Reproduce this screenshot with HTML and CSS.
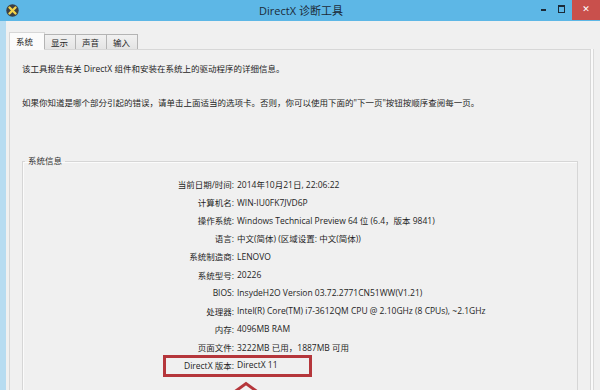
FILE: index.html
```html
<!DOCTYPE html>
<html lang="zh-CN">
<head>
<meta charset="utf-8">
<title>DirectX 诊断工具</title>
<link rel="stylesheet" href="styles.css">
</head>
<body>
<div class="window">
  <header class="titlebar">
    <div class="tb-left">
      <svg class="app-icon" width="13" height="13" viewBox="0 0 13 13">
        <circle cx="6.5" cy="6.5" r="6.2" fill="#3b3f44"/>
        <path d="M3.5 3.5 L9.5 9.5 M9.5 3.5 L3.5 9.5" stroke="#f2d24a" stroke-width="2.4" stroke-linecap="round"/>
      </svg>
    </div>
    <div class="title">DirectX 诊断工具</div>
    <div class="controls">
      <span class="ctl min"><span class="dash"></span></span>
      <span class="ctl max"><span class="box"></span></span>
      <span class="ctl close">✕</span>
    </div>
  </header>
  <div class="frame">
    <div class="client">
      <nav class="tabs">
        <span class="tab active">系统</span>
        <span class="tab">显示</span>
        <span class="tab">声音</span>
        <span class="tab">输入</span>
      </nav>
      <section class="panel">
        <p class="intro first">该工具报告有关 DirectX 组件和安装在系统上的驱动程序的详细信息。</p>
        <p class="intro second">如果你知道是哪个部分引起的错误，请单击上面适当的选项卡。否则，你可以使用下面的"下一页"按钮按顺序查阅每一页。</p>
        <fieldset class="group">
          <legend>系统信息</legend>
          <div class="row"><span class="label">当前日期/时间:</span><span class="value">2014年10月21日, 22:06:22</span></div>
          <div class="row"><span class="label">计算机名:</span><span class="value">WIN-IU0FK7JVD6P</span></div>
          <div class="row"><span class="label">操作系统:</span><span class="value">Windows Technical Preview 64 位 (6.4，版本 9841)</span></div>
          <div class="row"><span class="label">语言:</span><span class="value">中文(简体) (区域设置: 中文(简体))</span></div>
          <div class="row"><span class="label">系统制造商:</span><span class="value">LENOVO</span></div>
          <div class="row"><span class="label">系统型号:</span><span class="value">20226</span></div>
          <div class="row"><span class="label">BIOS:</span><span class="value">InsydeH2O Version 03.72.2771CN51WW(V1.21)</span></div>
          <div class="row"><span class="label">处理器:</span><span class="value">Intel(R) Core(TM) i7-3612QM CPU @ 2.10GHz (8 CPUs), ~2.1GHz</span></div>
          <div class="row"><span class="label">内存:</span><span class="value">4096MB RAM</span></div>
          <div class="row"><span class="label">页面文件:</span><span class="value">3222MB 已用，1887MB 可用</span></div>
          <div class="row hl"><span class="label">DirectX 版本:</span><span class="value">DirectX 11</span>
            <svg class="arrow" width="30" height="12" viewBox="0 0 30 12">
              <polyline points="2,12 15,2.5 28,12" fill="none" stroke="#b5363b" stroke-width="3"/>
            </svg>
          </div>
        </fieldset>
      </section>
    </div>
  </div>
</div>
</body>
</html>
```
FILE: styles.css
```css
html, body {
  margin: 0;
  padding: 0;
  background: #f0f0f0;
}
body {
  width: 600px;
  height: 390px;
  overflow: hidden;
  font-family: "Open Sans", "Noto Sans CJK SC", sans-serif;
  font-size: 8.5px;
  color: #1e1e1e;
}
.window {
  display: flex;
  flex-direction: column;
  height: 390px;
}
.titlebar {
  height: 21px;
  flex: none;
  background: #5db7e6;
  display: grid;
  grid-template-columns: 1fr auto 1fr;
  align-items: center;
}
.tb-left {
  display: flex;
  align-items: center;
  padding-left: 6px;
}
.app-icon { display: block; }
.title {
  font-size: 11px;
  color: #1b2a38;
  line-height: 21px;
  padding-left: 2px;
}
.controls {
  display: flex;
  justify-content: flex-end;
  align-self: start;
  height: 20px;
}
.ctl {
  display: flex;
  align-items: center;
  justify-content: center;
  height: 20px;
}
.min { width: 15px; }
.min .dash {
  width: 5px;
  height: 2px;
  background: #1b2a38;
}
.max { width: 21px; }
.max .box {
  width: 5px;
  height: 5px;
  border: 1px solid #1b2a38;
  border-top-width: 2px;
  margin-top: -3px;
}
.close {
  width: 28px;
  background: #c9504c;
  color: #fff;
  font-size: 9px;
  font-weight: bold;
  font-family: "DejaVu Sans", sans-serif;
  padding-bottom: 2px;
  box-sizing: border-box;
}
.frame {
  flex: 1;
  display: flex;
  border-left: 6px solid #b7dcf1;
}
.client {
  flex: 1;
  padding: 11px 9px 0 3px;
  display: flex;
  flex-direction: column;
}
.tabs {
  display: flex;
  align-items: flex-end;
  height: 17px;
  position: relative;
  z-index: 1;
}
.tab {
  height: 15px;
  line-height: 15px;
  box-sizing: border-box;
  padding: 0 7px 0 6px;
  border: 1px solid #b4b4b4;
  border-bottom: none;
  margin-left: -1px;
  background: linear-gradient(#f1f1f1, #e4e4e4);
}
.tab.active {
  margin-left: 0;
  margin-bottom: -1px;
  height: 18px;
  line-height: 17px;
  background: #fbfbfb;
  border-color: #d7d7d7;
  padding: 0 11px 0 6px;
}
.panel {
  flex: 1;
  border: 1px solid #d7d7d7;
  border-bottom: none;
  background: #f0f0f0;
  box-shadow: 2px 0 0 #fafafa, 3px 0 0 #dadada;
  padding: 0 12px;
  display: flex;
  flex-direction: column;
}
.intro {
  margin: 0;
  line-height: 17px;
}
.intro.first { margin-top: 10px; }
.intro.second { margin-top: 17px; }
.group {
  margin: 42px 0 0 0;
  padding: 6px 0 0 0;
  border: 1px solid #d6d6d6;
  border-bottom: none;
  box-shadow: inset 1px 1px 0 #fbfbfb;
  flex: 1;
  min-width: 0;
}
.group legend {
  padding: 0 3px;
  margin-left: 2px;
  line-height: 16px;
  color: #333;
}
.row {
  display: grid;
  grid-template-columns: 211px 1fr;
  column-gap: 3px;
  height: 18.1px;
  align-items: center;
  white-space: nowrap;
}
.label { text-align: right; }
.row.hl { position: relative; }
.row.hl::after {
  content: "";
  position: absolute;
  left: 140px;
  top: -1px;
  width: 149px;
  height: 22px;
  box-sizing: border-box;
  border: 3px solid #b5363b;
}
.arrow {
  position: absolute;
  left: 208px;
  top: 25px;
}
```
